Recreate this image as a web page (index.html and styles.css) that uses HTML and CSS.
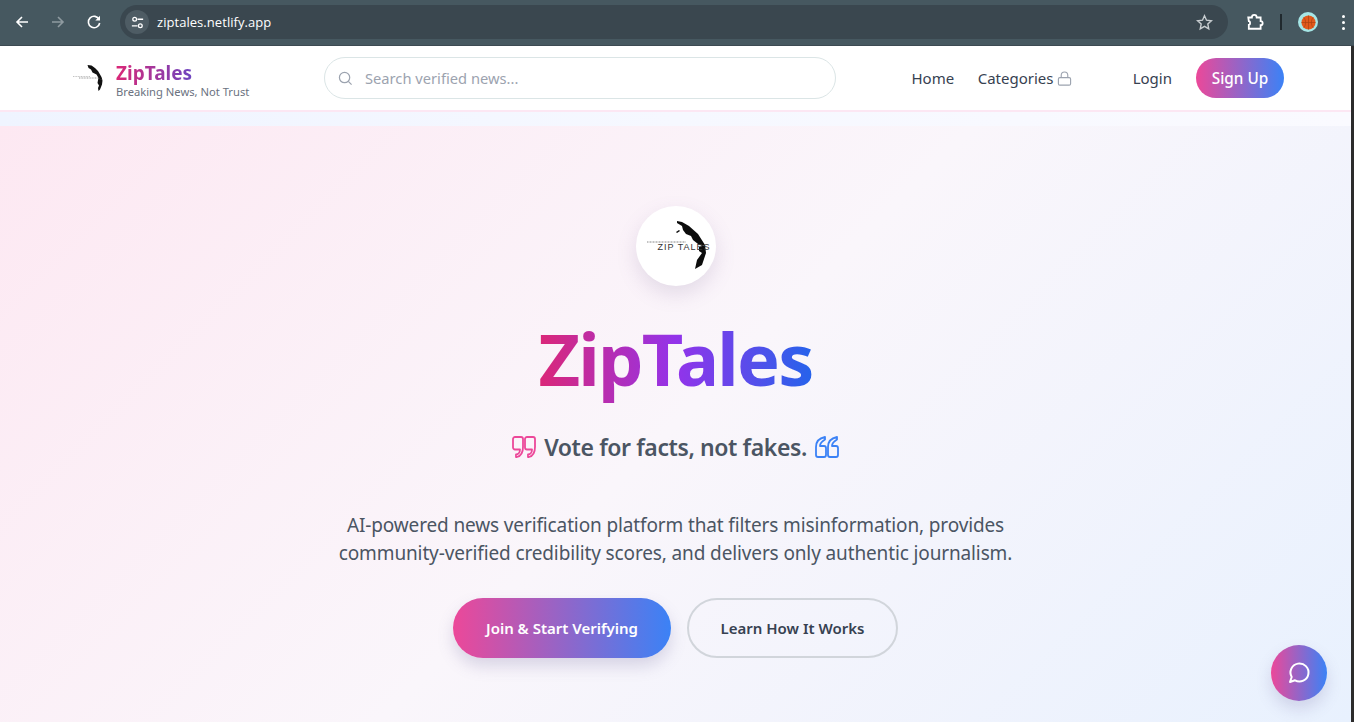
FILE: index.html
```html
<!DOCTYPE html>
<html lang="en">
<head>
<meta charset="utf-8">
<title>ZipTales</title>
<link rel="stylesheet" href="styles.css">
</head>
<body>
<div class="window">
  <div class="chrome">
    <svg class="tb-icon back" viewBox="0 0 16 16"><path d="M14 8H3M8 3 3 8l5 5"/></svg>
    <svg class="tb-icon fwd" viewBox="0 0 16 16"><path d="M2 8h11M8 3l5 5-5 5"/></svg>
    <svg class="tb-icon reload" viewBox="0 0 16 16"><path d="M13.200 5.500A5.700 5.700 0 1 0 13.700 9"/><path class="fill" d="M14 1.800v4.700H9.300z"/></svg>
    <div class="omnibox">
      <span class="site-chip">
        <svg class="tune" viewBox="0 0 16 16"><circle cx="5" cy="4.500" r="2"/><path d="M8 4.500h6M2 11.500h6"/><circle cx="11" cy="11.500" r="2"/></svg>
      </span>
      <span class="url">ziptales.netlify.app</span>
      <svg class="star" viewBox="0 0 16 16"><path d="m8 1.600 1.900 4.200 4.600.5-3.400 3.100.9 4.500L8 11.600l-4 2.300.9-4.500-3.400-3.100 4.600-.5z"/></svg>
    </div>
    <svg class="tb-icon ext" viewBox="0 0 16 16"><path d="M2 4h3.200c0-3 4.300-3 4.300 0H13v3.200c2.400 0 2.400 3.600 0 3.600V14H2.500v-3.500c1.500 0 1.500-3.200 0-3.200z"/></svg>
    <span class="divider"></span>
    <span class="avatar">
      <svg class="ball" viewBox="0 0 16 16"><circle class="ball-fill" cx="8" cy="8" r="7.500"/><path d="M8 .5v15M.5 8h15M3 2.500c2.500 3 2.500 8 0 11M13 2.500c-2.500 3-2.500 8 0 11"/></svg>
    </span>
    <span class="dots"><i></i><i></i><i></i></span>
  </div>
  <div class="viewport">
    <div class="page">
      <header class="nav">
        <a class="brand">
          <svg class="brand-logo" viewBox="0 0 32 28">
            <path d="M15.500 1l4 .5 3.500 2.500 3 3 3.500 6 1 3.500-4-2.500-2-3.500-4-2-1.500-3-2.500-1.500z"/>
            <path d="M26.500 13.500l4 3-.5 4-2 5-1.500 1.500-.5-3 1-2.500-1.500-2.500z"/>
            <path class="thin" d="M1 12.500h17"/>
            <path class="thin dark" d="M7 14h19"/>
          </svg>
          <span class="brand-text">
            <span class="brand-name">ZipTales</span>
            <span class="brand-tag">Breaking News, Not Trust</span>
          </span>
        </a>
        <div class="search">
          <svg class="search-icon" viewBox="0 0 16 16"><circle cx="7" cy="7" r="5.500"/><path d="m11 11 3.500 3.500"/></svg>
          <span class="search-text">Search verified news...</span>
        </div>
        <nav class="links">
          <a class="link">Home</a>
          <a class="link cat">Categories
            <svg class="lock" viewBox="0 0 16 16"><rect x="1.500" y="7" width="13" height="8" rx="1.500"/><path d="M4.500 7V4.500a3.500 3.500 0 0 1 7 0V7"/></svg>
          </a>
        </nav>
        <div class="auth">
          <a class="link">Login</a>
          <a class="signup">Sign Up</a>
        </div>
      </header>
      <div class="band"></div>
      <main class="hero">
        <div class="hero-logo">
          <svg class="hero-art" viewBox="0 0 60 60">
            <path d="M31 5l5 1 7 4 9 8 7 11-3 1-4-2-5-4-2-4-5-2-3-4-1-4-5-3z"/>
            <path d="M30 16l3-2 1 1-3 2z"/>
            <path d="M53 31l6-2 1 8-4 12-7 4 2-9 5-7-3-2z"/>
            <path class="thin" d="M1 26h39"/>
          </svg>
          <span class="hero-logo-text">ZIP TALES</span>
        </div>
        <h1 class="title">ZipTales</h1>
        <p class="tagline">
          <svg class="quote pink" viewBox="0 0 24 24"><path d="M3 2h6a2 2 0 0 1 2 2v8c0 5-2 9-6 10H4v-2.500c2 0 4-2 4-5H3a2 2 0 0 1-2-2V4a2 2 0 0 1 2-2zM15 2h6a2 2 0 0 1 2 2v8c0 5-2 9-6 10h-1v-2.500c2 0 4-2 4-5h-5a2 2 0 0 1-2-2V4a2 2 0 0 1 2-2z"/></svg>
          <span class="tag-text">Vote for facts, not fakes.</span>
          <svg class="quote blue" viewBox="0 0 24 24"><path d="M10 2C5 3 1 6 1 12v8a2 2 0 0 0 2 2h6a2 2 0 0 0 2-2v-7a2 2 0 0 0-2-2H5c0-2.500 2.500-5 5-6.500zM22 2c-5 1-9 4-9 10v8a2 2 0 0 0 2 2h6a2 2 0 0 0 2-2v-7a2 2 0 0 0-2-2h-4c0-2.500 2.500-5 5-6.500z"/></svg>
        </p>
        <p class="desc">AI-powered news verification platform that filters misinformation, provides<br>community-verified credibility scores, and delivers only authentic journalism.</p>
        <div class="cta">
          <a class="btn primary">Join &amp; Start Verifying</a>
          <a class="btn outline">Learn How It Works</a>
        </div>
      </main>
      <button class="chat" aria-label="Chat">
        <svg viewBox="0 0 24 24"><path d="M3 21l1.700-5A9 9 0 1 1 8 19.300z"/></svg>
      </button>
    </div>
    <div class="scroll-edge"></div>
  </div>
</div>
</body>
</html>
```
FILE: styles.css
```css
* { box-sizing: border-box; }
html, body { margin: 0; height: 100%; overflow: hidden; }
body { font-family: "Noto Sans", "Open Sans", Arial, sans-serif; color: #374151; }
p, h1 { margin: 0; }
svg { display: block; }

.window { height: 722px; display: flex; flex-direction: column; }

.chrome {
  height: 46px; flex: none; background: #465860; border-bottom: 1px solid #3c4a52;
  display: flex; align-items: center; padding: 0 0 1px 14px;
}
.tb-icon { width: 16px; height: 16px; fill: none; stroke: #fff; stroke-width: 1.600; }
.tb-icon .fill { fill: #fff; stroke: none; }
.back { margin-right: 20px; }
.fwd { stroke: #8f9aa0; margin-right: 20px; }
.reload { margin-right: 18px; }
.omnibox {
  width: 1108px; height: 34px; background: #3a474f; border-radius: 17px;
  display: flex; align-items: center; padding: 0 15px 0 5px; margin-right: 18px;
}
.site-chip {
  width: 24px; height: 24px; border-radius: 50%; background: #4e5c64;
  display: flex; align-items: center; justify-content: center;
}
.tune { width: 15px; height: 15px; fill: none; stroke: #fff; stroke-width: 1.400; }
.url { margin-left: 8px; color: #fff; font-size: 13px; letter-spacing: .05px; font-family: "Open Sans", "Noto Sans", sans-serif; }
.star { margin-left: auto; width: 17px; height: 17px; fill: none; stroke: #c9ced1; stroke-width: 1.300; }
.ext { width: 18px; height: 18px; margin-right: 16px; }
.divider { width: 2px; height: 16px; background: #20292e; margin-right: 16px; }
.avatar {
  width: 20px; height: 20px; border-radius: 50%; background: #a5e6e6;
  display: flex; align-items: center; justify-content: center; margin-right: 24px;
}
.ball { width: 15px; height: 15px; fill: none; stroke: #a8400f; stroke-width: .7; }
.ball-fill { fill: #e2591c; stroke: none; }
.dots { display: flex; flex-direction: column; gap: 3px; }
.dots i { width: 3px; height: 3px; border-radius: 50%; background: #fff; }

.viewport { flex: 1; display: flex; min-height: 0; }
.page { flex: 1; min-width: 0; position: relative; display: flex; flex-direction: column; }
.scroll-edge { width: 3px; background: #2b2b2b; flex: none; }

.nav {
  height: 66px; flex: none; background: #fff; border-bottom: 2px solid #fce7f3;
  display: flex; align-items: center; padding: 0 67px 0 72px;
}
.brand { display: flex; align-items: center; gap: 12px; width: 252px; }
.brand-logo { width: 32px; height: 28px; }
.brand-logo path { fill: #111; }
.brand-logo .thin { fill: none; stroke: #999; stroke-width: .6; stroke-dasharray: 1 .6; }
.brand-logo .dark { stroke: #555; }
.brand-text { display: flex; flex-direction: column; padding-top: 4px; }
.brand-name {
  font-size: 19px; font-weight: 700; line-height: 23px;
  background: linear-gradient(90deg, #db2777, #6d45c0);
  -webkit-background-clip: text; background-clip: text; color: transparent;
  align-self: flex-start;
}
.brand-tag { font-size: 11.200px; line-height: 14px; color: #6b7280; }
.search {
  width: 512px; height: 42px; border: 1px solid #dbe5e6; border-radius: 21px; background: #fff;
  display: flex; align-items: center; padding-left: 13px; gap: 12px;
}
.search-icon { width: 15px; height: 15px; fill: none; stroke: #9ca3af; stroke-width: 1.300; }
.search-text { font-size: 14.700px; color: #9ca3af; }
.links { display: flex; align-items: center; gap: 23.500px; margin-left: 75.500px; }
.link { font-size: 15px; color: #374151; }
.cat { display: flex; align-items: center; gap: 4px; }
.lock { width: 15px; height: 15px; fill: none; stroke: #9ca3af; stroke-width: 1.200; }
.auth { margin-left: auto; display: flex; align-items: center; gap: 24px; }
.signup {
  width: 88px; height: 40px; border-radius: 20px; color: #fff; font-size: 15.300px; font-weight: 500;
  background: linear-gradient(90deg, #ec4899, #3b82f6);
  display: flex; align-items: center; justify-content: center;
}

.band { height: 14px; flex: none; background: linear-gradient(90deg, #eff4ff, #f6f8ff 50%, #fafaff); }

.hero {
  flex: 1; background: linear-gradient(135deg, #fde8f2 0%, #faf6fb 50%, #e8f1fe 100%);
  display: flex; flex-direction: column; align-items: center; padding-top: 80px;
}
.hero-logo {
  width: 80px; height: 80px; border-radius: 50%; background: #fff; position: relative;
  box-shadow: 0 8px 20px rgba(120, 100, 150, .18); flex: none;
}
.hero-art { position: absolute; inset: 10px; width: 60px; height: 60px; }
.hero-art path { fill: #0c0c0c; }
.hero-art .thin { fill: none; stroke: #888; stroke-width: 1; stroke-dasharray: 1 .5; }
.hero-logo-text {
  position: absolute; left: 22px; top: 36px; font-family: "Liberation Sans", Arial, sans-serif;
  font-size: 9px; line-height: 10px; letter-spacing: 1px; color: #333; white-space: nowrap;
}
.title {
  margin-top: 20px; font-size: 72px; line-height: 104px; font-weight: 700; letter-spacing: -1.750px;
  background: linear-gradient(90deg, #db2777, #9333ea 50%, #2563eb);
  -webkit-background-clip: text; background-clip: text; color: transparent;
}
.tagline {
  margin-top: 21px; display: flex; align-items: center; gap: 8px;
  font-size: 23px; line-height: 32px; font-weight: 600; color: #4b5563; letter-spacing: -.4px;
}
.quote { width: 24px; height: 24px; fill: none; stroke-width: 1.800; stroke-linejoin: round; }
.quote.pink { stroke: #ec4899; }
.quote.blue { stroke: #3b82f6; }
.desc {
  margin-top: 48px; text-align: center; font-size: 19px; line-height: 28px; color: #4b5563; letter-spacing: -.13px;
}
.cta { margin-top: 31px; display: flex; gap: 16px; }
.btn {
  height: 60px; border-radius: 30px; display: flex; align-items: center; justify-content: center;
  font-size: 15px; font-weight: 600;
}
.primary {
  width: 218px; color: #fff; background: linear-gradient(90deg, #ec4899, #3b82f6);
  box-shadow: 0 8px 16px rgba(100, 90, 150, .22);
}
.outline { width: 211px; color: #374151; border: 2px solid #d1d5db; }
.chat {
  position: absolute; right: 24px; bottom: 21px; width: 56px; height: 56px; border: 0; border-radius: 50%; padding: 0;
  background: linear-gradient(90deg, #ec4899, #3b82f6);
  box-shadow: 0 8px 16px rgba(100, 90, 150, .2);
  display: flex; align-items: center; justify-content: center;
}
.chat svg { width: 24px; height: 24px; fill: none; stroke: #fff; stroke-width: 2; stroke-linejoin: round; }
```
